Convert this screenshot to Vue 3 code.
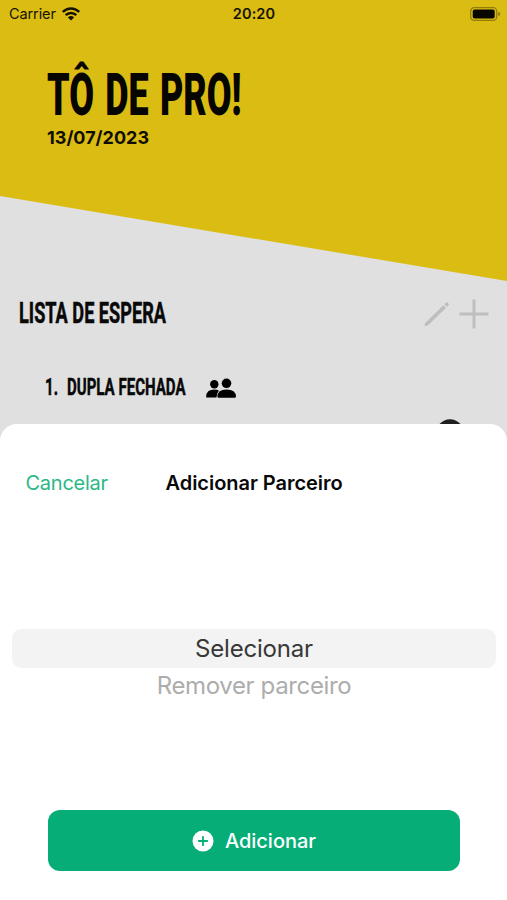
<script setup>
const options = ['Selecionar', 'Remover parceiro']
</script>

<template>
  <main class="screen">
    <header class="hero">
      <div class="status">
        <div class="carrier">
          <span class="carrier-name">Carrier</span>
          <svg width="18" height="14" viewBox="0 0 18 14">
            <g fill="none" stroke="#151300" stroke-width="2.5">
              <path d="M.8 5C5.5.2 12.5.2 17.2 5" />
              <path d="M3.7 8.2c3-3 7.6-3 10.6 0" />
            </g>
            <path d="M9 13.5 5.9 10.4q3.1-2.6 6.2 0z" fill="#151300" />
          </svg>
        </div>
        <span class="clock">20:20</span>
        <svg class="battery" width="31" height="14" viewBox="0 0 31 14">
          <rect x=".7" y=".7" width="26" height="12.6" rx="3.6" fill="none" stroke="#927d0b" stroke-width="1.3" />
          <rect x="2.7" y="2.6" width="22" height="8.8" rx="2" fill="#080700" />
          <path d="M28.2 4.7q2.2.8 2.2 2.3t-2.2 2.3z" fill="#927d0b" />
        </svg>
      </div>
      <svg class="title" width="200" height="56" viewBox="0 0 200 56">
        <text x="0" y="52.5" class="display" textLength="194.5" lengthAdjust="spacingAndGlyphs">TÔ DE PRO!</text>
      </svg>
      <div class="date">13/07/2023</div>
    </header>

    <section class="list">
      <div class="list-head">
        <svg class="section-title" width="150" height="28" viewBox="0 0 150 28">
          <text x="-1" y="23" class="display" textLength="147" lengthAdjust="spacingAndGlyphs">LISTA DE ESPERA</text>
        </svg>
        <div class="tools">
          <svg width="26" height="26" viewBox="0 0 26 26" fill="#bebebe">
            <path d="M1 22.2 19.3 4.3l2.6 2.7L3.8 24.4.7 25.2z" />
            <path d="m20.3 3.3 1.5-1.5q1-.9 2 0l.7.7q.9.9 0 1.8L22.9 6z" />
          </svg>
          <svg width="30" height="30" viewBox="0 0 30 30">
            <path d="M15 .5v29M.5 15h29" stroke="#bebebe" stroke-width="2.9" />
          </svg>
        </div>
      </div>
      <div class="entry">
        <svg class="entry-title" width="22" height="24" viewBox="0 0 22 24">
          <text x="0" y="20" class="display" textLength="13" lengthAdjust="spacingAndGlyphs">1.</text>
        </svg>
        <svg class="entry-title" width="122" height="24" viewBox="0 0 122 24">
          <text x="0" y="20" class="display" textLength="118.5" lengthAdjust="spacingAndGlyphs">DUPLA FECHADA</text>
        </svg>
        <svg class="people" width="31" height="21" viewBox="0 0 31 21">
          <circle cx="8.3" cy="6.2" r="4.2" />
          <circle cx="20.5" cy="5.3" r="4.8" />
          <path d="M.2 19.6q-.4-8 8.3-8 2.7 0 4.5 1.2-2.6 2.2-2.5 6.8z" />
          <path d="M11.4 18.6q0-7.2 9.2-7.2t9.4 7.2q0 1.2-1.4 1.2H12.8q-1.4 0-1.4-1.2z" />
        </svg>
      </div>
    </section>

    <section class="sheet">
      <svg class="peek" width="22" height="5" viewBox="0 0 22 5">
        <path d="M.5 5Q5 .3 11 .3T21.5 5z" fill="#1e1f20" />
      </svg>
      <div class="sheet-head">
        <button class="cancel">Cancelar</button>
        <h2>Adicionar Parceiro</h2>
      </div>
      <div class="picker">
        <div v-for="(o, i) in options" :key="o" class="option" :class="{ selected: i === 0 }"><span>{{ o }}</span></div>
      </div>
      <button class="add">
        <svg width="22" height="22" viewBox="0 0 22 22">
          <circle cx="11" cy="11" r="10.5" fill="#fff" />
          <path d="M11 6.8v8.4M6.8 11h8.4" stroke="#06ad76" stroke-width="1.8" stroke-linecap="round" />
        </svg>
        <span>Adicionar</span>
      </button>
    </section>
  </main>
</template>

<style>
body { margin: 0; }
</style>

<style scoped>
* { box-sizing: border-box; }
svg { display: block; flex: none; }
button { border: 0; padding: 0; background: none; font-family: inherit; }
.screen {
  width: 507px;
  height: 900px;
  overflow: hidden;
  display: flex;
  flex-direction: column;
  background: #e0e0e0;
  font-family: Inter, "Liberation Sans", sans-serif;
  color: #090909;
}
.hero {
  height: 281px;
  flex: none;
  background: #dbbc13;
  clip-path: polygon(0 0, 100% 0, 100% 100%, 0 196px);
}
.status {
  height: 28px;
  padding: 0 6px 0 9px;
  display: grid;
  grid-template-columns: 1fr auto 1fr;
  align-items: center;
  color: #151300;
}
.carrier { display: flex; align-items: center; gap: 6px; }
.carrier-name { font-size: 14.5px; line-height: 28px; letter-spacing: -.1px; }
.clock { margin: -1px 2px 0 0; font-size: 14.5px; font-weight: 600; letter-spacing: .1px; }
.battery { justify-self: end; margin-top: -1px; }
.display { font-family: Roboto, sans-serif; font-weight: 900; fill: currentColor; }
.title { margin: 34px 0 0 47px; overflow: visible; font-size: 60px; word-spacing: 4px; color: #060500; }
.date { margin: 8.5px 0 0 47px; font-size: 18px; line-height: 22px; font-weight: 700; color: #100e00; }
.list { height: 143px; flex: none; }
.list-head { display: flex; align-items: center; justify-content: space-between; padding: 18px 18px 0 20px; }
.section-title { overflow: visible; font-size: 29.5px; }
.section-title .display, .entry-title .display { font-weight: 700; stroke: currentColor; stroke-width: .5px; }
.tools { display: flex; align-items: center; gap: 9px; }
.entry { display: flex; align-items: center; padding: 46px 0 0 45px; }
.entry-title { overflow: visible; font-size: 24px; }
.people { margin: 2px 0 0 17px; }
.sheet {
  position: relative;
  flex: 1;
  display: flex;
  flex-direction: column;
  background: #fff;
  border-radius: 17px 17px 0 0;
}
.peek { position: absolute; left: 438.5px; top: -5px; }
.sheet-head {
  display: flex;
  align-items: center;
  height: 30px;
  margin-top: 44px;
  padding-left: 25.5px;
}
.cancel { width: 140px; text-align: left; font-size: 20px; letter-spacing: -.25px; color: #2bb886; }
h2 { margin: 0; font-size: 20px; font-weight: 600; letter-spacing: -.04px; }
.picker { margin: 131px 11px 0 12px; }
.option {
  height: 34px;
  display: flex;
  justify-content: center;
  align-items: center;
  font-size: 24px;
  letter-spacing: -.36px;
  color: #adadad;
}
.option.selected { height: 39px; border-radius: 9px; background: #f3f3f3; color: #383838; letter-spacing: -.2px; }
.add {
  margin: 108px 47px 0 48px;
  height: 61px;
  border-radius: 12px;
  background: #06ad76;
  color: #fff;
  display: flex;
  align-items: center;
  justify-content: center;
  gap: 11px;
  font-size: 20px;
  font-weight: 500;
}
</style>
